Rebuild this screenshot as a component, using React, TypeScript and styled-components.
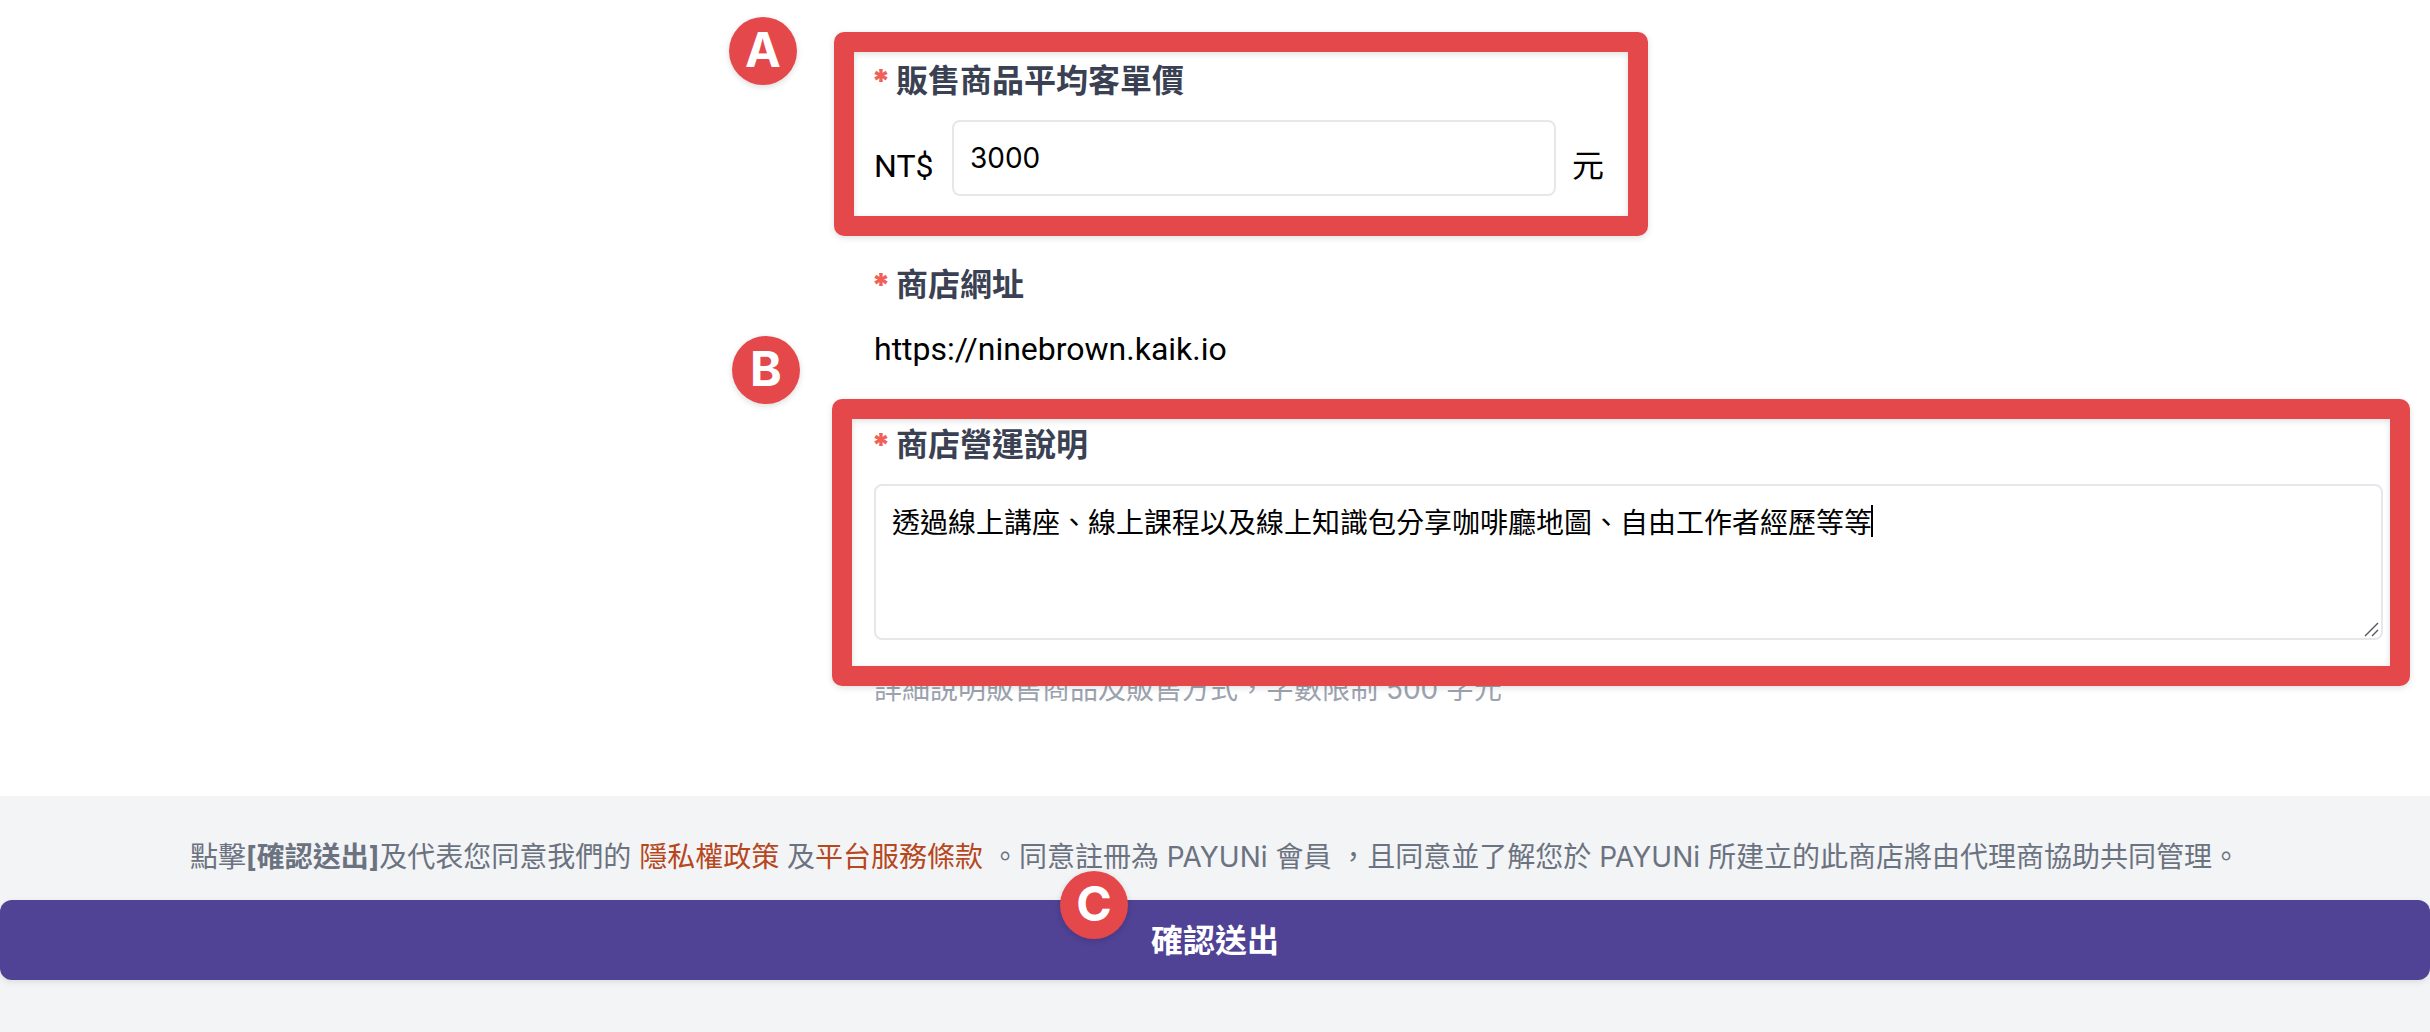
import React, { useState } from "react";
import styled, { createGlobalStyle } from "styled-components";

const GlobalStyle = createGlobalStyle`
  *, *::before, *::after { box-sizing: border-box; }
  body {
    margin: 0;
    background: #ffffff;
    color: #000000;
    font-family: Roboto, "Noto Sans CJK TC", sans-serif;
    font-size: 32px;
    line-height: 50px;
  }
`;

const smallFont = `Inter, "Noto Sans CJK TC", sans-serif`;

const Page = styled.div`
  min-height: 100vh;
  display: flex;
  flex-direction: column;
`;

const FormArea = styled.main`
  display: grid;
  grid-template-columns: minmax(0, 874fr) minmax(0, 1509fr);
  padding: 56px 47px 86px 0;
`;

const Fields = styled.div`
  grid-column: 2;
  display: flex;
  flex-direction: column;
  gap: 46px;
`;

const Field = styled.div<{ $width?: string; $after?: number }>`
  position: relative;
  display: flex;
  flex-direction: column;
  gap: 14px;
  width: ${(p) => p.$width ?? "100%"};
  max-width: 100%;
  margin-bottom: ${(p) => p.$after ?? 0}px;
`;

const Label = styled.label`
  display: flex;
  gap: 8px;
  color: #3a4152;
  font-weight: 700;
`;

const Required = styled.span`
  display: flex;
  justify-content: center;
  width: 14px;
  color: #ef6157;
  font-family: Inter, sans-serif;
  font-weight: 900;
`;

const PriceRow = styled.div`
  display: flex;
  align-items: center;
  gap: 16px;
`;

const Affix = styled.span<{ $width: number }>`
  flex: 0 0 ${(p) => p.$width}px;
  margin-top: 16px;
  white-space: nowrap;
`;

const TextInput = styled.input`
  flex: 1;
  min-width: 0;
  height: 76px;
  padding: 0 16px;
  border: 2px solid #e5e7eb;
  border-radius: 8px;
  background: #ffffff;
  color: #000000;
  font-family: ${smallFont};
  font-size: 28px;
  outline: none;
`;

const AreaWrap = styled.div`
  position: relative;
  display: flex;
`;

const TextArea = styled.textarea`
  flex: 1;
  min-width: 0;
  height: 156px;
  padding: 16px;
  border: 2px solid #e5e7eb;
  border-radius: 8px;
  background: #ffffff;
  color: #000000;
  font-family: ${smallFont};
  font-size: 28px;
  line-height: 42px;
  outline: none;
  resize: none;
`;

const Caret = styled.span`
  position: absolute;
  top: 21px;
  left: 997px;
  width: 2px;
  height: 32px;
  background: #000000;
`;

const Grip = styled.svg`
  position: absolute;
  right: 4px;
  bottom: 3px;
`;

const Hint = styled.p`
  margin: 14px 0 0;
  color: #9ca3af;
  font-family: ${smallFont};
  font-size: 28px;
  line-height: 42px;
`;

const Frame = styled.div<{ $inset: string }>`
  position: absolute;
  inset: ${(p) => p.$inset};
  border: 20px solid #e5484b;
  border-radius: 10px;
  filter: drop-shadow(0 2px 3px rgba(0, 0, 0, 0.12));
  pointer-events: none;
`;

const Badge = styled.span<{ $top: string; $left: string }>`
  position: absolute;
  top: ${(p) => p.$top};
  left: ${(p) => p.$left};
  width: 68px;
  height: 68px;
  display: flex;
  align-items: center;
  justify-content: center;
  padding-bottom: 2px;
  border-radius: 50%;
  background: #e5484b;
  box-shadow: 0 2px 6px rgba(0, 0, 0, 0.14);
  color: #ffffff;
  font-family: Inter, sans-serif;
  font-size: 48px;
  font-weight: 700;
  pointer-events: none;
`;

const Footer = styled.footer`
  flex: 1;
  padding: 40px 0 52px;
  background: #f3f4f6;
`;

const Terms = styled.p`
  margin: 0 0 22px;
  color: #6b7280;
  font-family: ${smallFont};
  font-size: 28px;
  line-height: 42px;
  text-align: center;
`;

const TermsLink = styled.a`
  color: #b7471d;
  text-decoration: none;
`;

const SubmitWrap = styled.div`
  position: relative;
`;

const SubmitButton = styled.button`
  display: block;
  width: 100%;
  height: 80px;
  padding: 2px 0 0;
  border: 0;
  border-radius: 12px;
  background: #504295;
  box-shadow: 0 2px 6px rgba(0, 0, 0, 0.1);
  color: #ffffff;
  font: inherit;
  font-weight: 700;
  cursor: pointer;
`;

export default function App() {
  const [price, setPrice] = useState("3000");
  const [about, setAbout] = useState(
    "透過線上講座、線上課程以及線上知識包分享咖啡廳地圖、自由工作者經歷等等"
  );

  return (
    <Page>
      <GlobalStyle />
      <FormArea>
        <Fields>
          <Field $width="732px" $after={18}>
            <Label htmlFor="price">
              <Required>*</Required>
              販售商品平均客單價
            </Label>
            <PriceRow>
              <Affix $width={62}>NT$</Affix>
              <TextInput id="price" value={price} onChange={(e) => setPrice(e.target.value)} />
              <Affix $width={34}>元</Affix>
            </PriceRow>
            <Frame $inset="-24px -42px -40px -40px" />
            <Badge $top="-39px" $left="-145px">A</Badge>
          </Field>

          <Field>
            <Label as="div">
              <Required>*</Required>
              商店網址
            </Label>
            <span>https://ninebrown.kaik.io</span>
          </Field>

          <Field>
            <Label htmlFor="about">
              <Required>*</Required>
              商店營運說明
            </Label>
            <AreaWrap>
              <TextArea id="about" value={about} onChange={(e) => setAbout(e.target.value)} />
              <Caret />
              <Grip width="15" height="15" viewBox="0 0 15 15" stroke="#555555" strokeWidth="1.4" aria-hidden="true">
                <path d="M1 14 14 1M8 14l6-6" />
              </Grip>
            </AreaWrap>
            <Hint>詳細說明販售商品及販售方式，字數限制 500 字元</Hint>
            <Frame $inset="-21px -27px 24px -42px" />
            <Badge $top="-84px" $left="-142px">B</Badge>
          </Field>
        </Fields>
      </FormArea>

      <Footer>
        <Terms>
          點擊<b>[確認送出]</b>及代表您同意我們的 <TermsLink href="#privacy">隱私權政策</TermsLink> 及
          <TermsLink href="#terms">平台服務條款</TermsLink> 。同意註冊為 PAYUNi 會員 ，且同意並了解您於 PAYUNi
          所建立的此商店將由代理商協助共同管理。
        </Terms>
        <SubmitWrap>
          <SubmitButton type="button">確認送出</SubmitButton>
          <Badge $top="-29px" $left="calc(50% - 155px)">C</Badge>
        </SubmitWrap>
      </Footer>
    </Page>
  );
}
